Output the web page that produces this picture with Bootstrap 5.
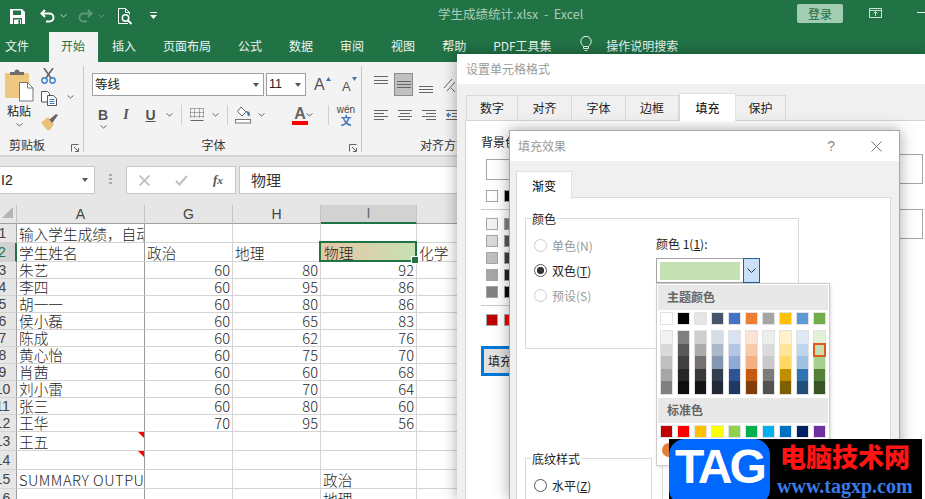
<!DOCTYPE html>
<html lang="zh-CN">
<head>
<meta charset="utf-8">
<title>学生成绩统计.xlsx - Excel</title>
<link href="https://cdn.jsdelivr.net/npm/bootstrap@5.3.0/dist/css/bootstrap.min.css" rel="stylesheet">
<style>
html,body{margin:0;height:499px;overflow:hidden}
body{width:925px;position:relative;font-family:"Noto Sans CJK SC","Liberation Sans",sans-serif;font-size:12px;color:#222;background:#fff}
svg{display:block;flex:none}
/* title bar */
.titlebar{height:32px;background:#217346;color:#a9cdb9;padding-left:10px}
.qat{gap:15px}
.q-undo{gap:5px}
.q-redo{gap:5px;margin-left:-4px}
.q-prev{margin-left:-2px}
.q-more{margin-left:2px}
.doc-title{position:absolute;left:438px;top:5px;font-size:12.5px;line-height:18px;white-space:pre}
.login{position:absolute;left:797px;top:4px;width:46px;height:19px;background:#a3cdb3;border:0;border-radius:2px;color:#1d6b40;font-size:12px;line-height:19px;padding:0}
.tb-ico{position:absolute}
.tb-ico.a{left:869px;top:8px}.tb-ico.b{left:917px;top:12px}
/* tabs */
.rtabs{height:30px;background:#217346;flex-wrap:nowrap;color:#e9f2ed;font-size:12px}
.rtabs .nav-link{color:#eef5f1;padding:5px 13.5px 0;height:30px;line-height:18px;border-radius:0;white-space:nowrap}
.rtabs .nav-link.first{padding-left:5px;padding-right:20px}
.rtabs .nav-link.active{background:#f3f3f3;color:#217346;padding:5px 13px 0 12px}
.rtabs .nav-link.home-next{padding-left:14px}
.rtabs .bulb{padding:4px 14px 0 15px}
/* ribbon */
.ribbon{height:95px;background:#f3f3f3;border-bottom:2px solid #d4d4d4;padding-top:4px}
.rgroup{height:86px;border-right:1px solid #c8c8c8;display:flex;flex-direction:column;flex:none}
.g1{width:84px}.g2{width:278px;padding-left:8px}.g3{width:95px;padding-left:12px}
.glabel{margin-top:auto;height:15px;line-height:15px;font-size:12px;position:relative;color:#333;text-align:center}
.g1 .glabel{padding-right:29px}
.g2 .glabel{padding-right:26px}
.g3 .glabel{text-align:left;padding-left:46px;white-space:nowrap;overflow:hidden}
.launcher{position:absolute;right:4px;bottom:0}
.combo{height:23px;background:#fff;border:1px solid #a0a0a0;display:flex;align-items:center;font-size:12.5px;padding:0 4px 0 2px;justify-content:space-between}
.combo.font{width:172px}.combo.size{width:40px;margin-left:2px}
.combo.size span{font-family:"Liberation Sans",sans-serif}
.tri{width:0;height:0;border-left:3.5px solid transparent;border-right:3.5px solid transparent;border-top:4px solid #555}
.grow{font-family:"Liberation Sans",sans-serif;color:#555;line-height:1}
.grow.big{font-size:16px;width:12px}
.grow.small{font-size:13px;width:10px;margin-top:3px}
.row2{display:grid;grid-template-columns:22px 24px 25px 12px 6px 1px 30px 6px 9px 1px 30px 6px 6px 24px 12px 6px 1px 30px 6px;height:20px;margin-top:9px;align-items:center;justify-items:center}
.fmt{font:700 14px/1 "Liberation Sans",sans-serif;color:#555}
.fmt.i{font-style:italic;font-family:"Liberation Serif",serif}
.fmt.u{text-decoration:underline}
.vsep{width:1px;height:20px;background:#cfcfcf}
.pin{font:10px/10px "Liberation Sans",sans-serif;color:#444;text-align:center;width:20px}
.pin b{display:block;font-size:11px;line-height:10px;color:#3f78b5;font-family:"Noto Sans CJK SC",sans-serif;font-weight:700}
.a-sel{width:22px;height:23px;background:#c0c0c0;border:1px solid #8c8c8c;margin:0 6px;display:flex;align-items:center;justify-content:center}
.fontA{position:relative;width:16px;text-align:center;font:700 16px/15px "Liberation Sans",sans-serif;color:#666;border-bottom:4px solid #f00}
/* formula bar */
.fbar{height:48px;background:#e6e6e6;padding-top:9px;align-items:flex-start}
.namebox{width:95px;height:28px;background:#fff;border:1px solid #c6c6c6;border-left:0;font-size:14px;line-height:26px;padding:0 6px 0 1px;display:flex;justify-content:space-between;align-items:center;font-family:"Liberation Sans",sans-serif}
.dots{width:31px}
.fnbtn{width:110px;height:28px;background:#fff;border:1px solid #c6c6c6;align-items:center;padding-left:12px}
.fx{font:italic 700 13px/1 "Liberation Serif",serif;color:#555;margin-left:25px}
.fnbtn .chk{margin-left:25px}
.finput{margin-left:3px;height:28px;flex:1;background:#fff;border:1px solid #c6c6c6;font-size:15px;line-height:26px;padding-left:11px;color:#333}
/* sheet */
.sheet-wrap{height:294px;overflow:hidden}
.sheet{table-layout:fixed;border-collapse:separate;border-spacing:0;width:925px;font-size:14.67px;color:#262626;font-weight:300}
.sheet th,.sheet td{padding:0 2px;border-right:1px solid #d4d4d4;border-bottom:1px solid #d4d4d4;height:19px;line-height:17px;white-space:nowrap;overflow:hidden;vertical-align:bottom}
.sheet tr.n td,.sheet tr.n th{height:17px;line-height:16px}
.sheet thead th{background:#e6e6e6;text-align:center;font-weight:400;color:#444;border-bottom-color:#9f9f9f;border-right-color:#c6c6c6;font-family:"Liberation Sans",sans-serif;font-size:14px}
.sheet tbody th{background:#e6e6e6;border-right-color:#9f9f9f;font-weight:400;color:#444;text-align:center;padding:0;text-indent:-11px;font-family:"Liberation Sans",sans-serif;font-size:14px}
.sheet td.a{border-right-color:#9a9a9a}
.sheet td.sum{letter-spacing:.5px}
.sheet td.r{text-align:right;padding-right:2px}
.sheet th.corner{position:relative;padding:0}
.corner::after{content:"";position:absolute;left:2px;top:2px;border-left:11px solid transparent;border-bottom:11px solid #b5b5b5}
.sheet thead th.on{background:#d2d2d2;border-bottom:2px solid #217346;color:#666}
.sheet tbody th.on{background:#d2d2d2;border-right:2px solid #217346;color:#217346}
.cmt{position:relative}
.cmt::after{content:"";position:absolute;right:0;top:0;border-top:6px solid #f00;border-left:6px solid transparent}
.sheet td.sel{position:relative;overflow:visible;background:linear-gradient(90deg,#eac6a4,#c5e0b3);padding-left:3px}
.sel::before{content:"";position:absolute;left:-2px;top:-2px;right:-1px;bottom:-1px;border:2px solid #217346}
.sel::after{content:"";position:absolute;right:-3px;bottom:-3px;width:6px;height:6px;background:#217346;border:1px solid #fff;box-sizing:content-box}
/* dialogs */
.dlg{position:absolute;background:#f0f0f0;box-shadow:0 0 14px rgba(0,0,0,.35);overflow:hidden}
.dlg-title{height:30px;background:#fff;color:#9a9a9a;font-size:12px;line-height:30px;padding-left:9px;display:flex;align-items:center}
.back{left:457px;top:54px;width:468px;height:445px}
.front{left:509px;top:130px;width:391px;height:369px;border:1px solid #a8a8a8;border-bottom:0}
.xtabs{border-bottom:0;height:27px;flex-wrap:nowrap}
.xtabs .nav-link{height:25px;margin:2px 0 0;background:#f0f0f0;border:1px solid #d9d9d9;border-bottom:0;border-left:0;border-radius:0;color:#222;padding:0;line-height:23px;text-align:center;font-size:12px}
.xtabs .nav-item:first-child .nav-link{border-left:1px solid #d9d9d9}
.xtabs .nav-link.active{background:#fff;height:28px;margin-top:0;line-height:28px;border-left:1px solid #d9d9d9;position:relative;z-index:1}
.back .xtabs{margin:9px 0 0 9px}
.t1{width:52px}.t2,.t3{width:54px}.t4{width:53px}.t5{width:57px}.t6{width:50px}
.bpanel{margin-left:8px;width:520px;background:#fff;border:1px solid #d4d4d4;height:400px;padding:12px 0 0 15px;display:flex}
.bleft{width:270px;flex:none}
.nocolor{width:120px;height:21px;margin:8px 0 0 5px;border:1px solid #a5a5a5;background:#fff}
.swrow{display:flex;gap:6px;margin:5px 0 0 5px}
.swrow.t{margin-top:10px}
.sw{width:12px;height:12px;border:1px solid #a5a5a5;flex:none}
.hline{border-top:1px solid #c9c9c9;margin:7px 0 0;width:120px}
.hline+.swrow{margin-top:8px}
.fillbtn{width:100px;height:30px;margin-top:20px;border:3px solid #0078d7;border-radius:0;background:#e1e1e1;font-size:12px;padding:0 0 0 4px;text-align:left;color:#222;line-height:22px;white-space:nowrap}
.bright{flex:1;padding-top:21px;margin-left:22px}
.rbox{height:30px;border:1px solid #a5a5a5;background:#fff;margin-bottom:25px;width:150px}
.front .dlg-title{padding-left:8px;justify-content:space-between;padding-right:17px}
.q{font:14px "Liberation Sans",sans-serif;color:#888;margin-left:auto;margin-right:36px}
.front .xtabs{margin:10px 0 0 6px}
.front .xtabs .nav-link{width:56px}
.fpanel{margin:-1px 8px 0 6px;background:#fff;border:1px solid #d9d9d9;height:320px;padding:20px 8px 0}
.fs{border:1px solid #d9d9d9;position:relative}
.fs-main{width:274px;height:131px;display:flex;padding:0 8px}
.leg{position:absolute;left:5px;top:-8px;background:#fff;padding:0 1px;line-height:15px;font-size:12px;color:#222}
.radios{width:122px;padding-top:14px;flex:none}
.radio-row{display:flex;align-items:center;height:25px;color:#999;font-size:12px;gap:5px}
.radio-row.on{color:#222}
.radio-row .form-check-input{margin:0;width:13px;height:13px;flex:none;border-color:#ccc;background:#fff;opacity:1}
.radio-row.on .form-check-input{border:1px solid #555;background-image:radial-gradient(circle,#333 0 3.4px,transparent 3.9px);background-color:#fff}
.c-label{margin-top:17px;line-height:16px;color:#222;font-size:12px}
.colorwrap{position:relative;padding-top:0}
.pick{margin-top:6px;width:104px;height:25px;border:1px solid #a5a5a5;background:#fff;display:flex;padding:0}
.pick i{display:block;width:80px;height:18px;margin:3px;background:#c5e0b3}
.pick b{margin-left:auto;width:17px;background:#c9e0f7;border:1px solid #245f9a;display:flex;align-items:center;justify-content:center;height:25px;margin-top:-1px;margin-right:-1px}
.pop{position:absolute;left:0;top:64px;width:174px;height:183px;background:#fff;border:1px solid #cdcdcd;padding:1px;box-shadow:1px 1px 3px rgba(0,0,0,.15);z-index:3}
.pop h6{margin:0;height:25px;background:#e8e8e8;color:#666;font-size:12px;font-weight:700;line-height:24px;padding-left:9px}
.sgrid{display:grid;grid-template-columns:repeat(10,13px);column-gap:4px;padding-left:2px}
.sgrid.one{margin:2px 0 5px}
.sgrid.one div{height:13px;border:1px solid #e2e2e2}
.shades{margin-bottom:3px}
.sc{border:1px solid #e2e2e2;height:65px}
.sc div{height:12.6px;position:relative}
.sc .pk{outline:2px solid #e2591c;outline-offset:-1px;z-index:1}
.more{display:block;margin:1px 0 0 4px}
.lower{display:flex;gap:10px;margin-top:109px}
.fs-low{width:127px;height:60px;padding:14px 8px 0}
.fs-low .radio-row{color:#222}
.fs-low .form-check-input{border-color:#555}
.fs-r{width:150px;height:60px;margin-top:2px}
/* watermark */
.wm{position:absolute;left:669px;top:439px;width:253px;height:60px;background:#000;z-index:5;overflow:hidden;display:flex}
.wm-tag{width:101px;height:66px;background:#0068ff;border-radius:16px;color:#fff;font:700 48px/56px "Liberation Sans",sans-serif;letter-spacing:-3px;text-align:center;flex:none}
.wm-t{flex:1;padding-left:10px}
.wm-cn{color:#ff1414;font-size:26px;font-weight:900;line-height:34px;white-space:nowrap}
.wm-en{color:#3a7be8;font:700 20px/20px "Liberation Serif",serif;margin:3px 0 0 -3px;white-space:nowrap}
</style>
</head>
<body>
<header class="titlebar d-flex align-items-center">
  <div class="qat d-flex align-items-center">
    <svg width="15" height="15" viewBox="0 0 15 15"><path d="M0 0h12l3 3v12H0z" fill="#fff"/><path d="M3 1.500h8v4.500H3zM3 9h9v6H3z" fill="#217346"/><path d="M4 10.500h7V15H4z" fill="#fff"/><path d="M8.500 11h1.500v4H8.500z" fill="#217346"/></svg>
    <div class="q-undo d-flex align-items-center">
      <svg width="15" height="14" viewBox="0 0 15 14" fill="none" stroke="#fff" stroke-width="2"><path d="M5 1 1.500 4.500 5 8"/><path d="M2 4.500h7.500a4 4 0 0 1 0 8H6"/></svg>
      <svg width="7" height="4" viewBox="0 0 7 4" fill="none" stroke="#b7d3c3"><path d="m.5.500 3 2.500 3-2.500"/></svg>
    </div>
    <div class="q-redo d-flex align-items-center">
      <svg width="15" height="14" viewBox="0 0 15 14" fill="none" stroke="#5d9a79" stroke-width="2"><path d="M10 1l3.500 3.500L10 8"/><path d="M13 4.500H5.500a4 4 0 0 0 0 8H9"/></svg>
      <svg width="7" height="4" viewBox="0 0 7 4" fill="none" stroke="#5d9a79"><path d="m.5.500 3 2.500 3-2.500"/></svg>
    </div>
    <svg class="q-prev" width="15" height="17" viewBox="0 0 15 17" fill="none" stroke="#fff"><path d="M10 15.500H.5V.5h7l4 4v2"/><path d="M7.500.5v4h4"/><circle cx="7.500" cy="10" r="3.200" stroke-width="1.500"/><path d="m10 12.500 3.500 3.500" stroke-width="2"/></svg>
    <svg class="q-more" width="7" height="8" viewBox="0 0 7 8"><path d="M0 0h7v1H0z M0 3h7L3.500 7z" fill="#fff"/></svg>
  </div>
  <span class="doc-title">学生成绩统计.xlsx  -  Excel</span>
  <button class="login btn" type="button">登录</button>
  <svg class="tb-ico a" width="13" height="10" viewBox="0 0 13 10" fill="none" stroke="#cfe2d7"><path d="M.5.500h12v9H.5zM.5 2.500h12M6.500 8V4M4.500 5.500l2-2 2 2"/></svg>
  <svg class="tb-ico b" width="8" height="1" viewBox="0 0 8 1"><path d="M0 0h8v1H0z" fill="#e6f0ea"/></svg>
</header>
<ul class="nav rtabs">
  <li class="nav-item"><a class="nav-link first" href="#">文件</a></li>
  <li class="nav-item"><a class="nav-link active" href="#">开始</a></li>
  <li class="nav-item"><a class="nav-link home-next" href="#">插入</a></li>
  <li class="nav-item"><a class="nav-link" href="#">页面布局</a></li>
  <li class="nav-item"><a class="nav-link" href="#">公式</a></li>
  <li class="nav-item"><a class="nav-link" href="#">数据</a></li>
  <li class="nav-item"><a class="nav-link" href="#">审阅</a></li>
  <li class="nav-item"><a class="nav-link" href="#">视图</a></li>
  <li class="nav-item"><a class="nav-link" href="#">帮助</a></li>
  <li class="nav-item"><a class="nav-link" href="#">PDF工具集</a></li>
  <li class="nav-item bulb"><svg width="12" height="16" viewBox="0 0 12 16" fill="none" stroke="#eef5f1"><path d="M3.500 10.500C2.500 9 .8 8 .8 5.500a5.200 5.200 0 0 1 10.400 0c0 2.500-1.700 3.500-2.700 5zM3.500 10.500h5v2h-5zM4.500 14.500h3"/></svg></li>
  <li class="nav-item"><a class="nav-link ps-0" href="#">操作说明搜索</a></li>
</ul>
<section class="ribbon d-flex">
  <div class="rgroup g1">
    <div class="d-flex">
      <div class="d-flex flex-column align-items-center" style="width:28px;margin-left:5px">
        <svg width="29" height="33" viewBox="0 0 29 33" style="margin-top:3px"><rect y="4" width="24" height="25" rx="1" fill="#efc77e"/><path d="M5 6V3h4.500a2.500 2.500 0 0 1 5 0H19v3z" fill="#6e6e6e"/><path d="M14.500 13.500h8l5.500 5.500v13H14.500z" fill="#fff" stroke="#777"/><path d="M22.500 13.500V19H28" fill="none" stroke="#777"/></svg>
        <span style="line-height:15px;font-size:12px;margin-top:1px">粘贴</span>
        <svg width="7" height="4" viewBox="0 0 7 4" fill="none" stroke="#666" style="margin-top:5px"><path d="m.5.500 3 2.500 3-2.500"/></svg>
      </div>
      <div class="d-flex flex-column" style="margin-left:8px">
        <svg width="15" height="16" viewBox="0 0 15 16" fill="none" style="margin-top:2px"><path d="M3 0l7 10M12 0 5 10" stroke="#666" stroke-width="1.600"/><circle cx="3.500" cy="12.500" r="2.700" stroke="#3d7fc4" stroke-width="1.400"/><circle cx="11.500" cy="12.500" r="2.700" stroke="#3d7fc4" stroke-width="1.400"/></svg>
        <div class="d-flex align-items-center" style="margin-top:7px">
          <svg width="16" height="15" viewBox="0 0 16 15" fill="none" stroke="#555"><path d="M.5.500h6l2 2V11H.5z" fill="#fff"/><path d="M6.500 4.500h6l3 3v7h-9z" fill="#fff"/><path d="M8.500 8.500h5M8.500 10.500h5M8.500 12.500h5" stroke="#3d7fc4"/></svg>
          <svg width="7" height="4" viewBox="0 0 7 4" fill="none" stroke="#666" style="margin-left:10px;margin-top:-3px"><path d="m.5.500 3 2.500 3-2.500"/></svg>
        </div>
        <svg width="18" height="16" viewBox="0 0 18 16" style="margin-top:8px"><path d="M0 8.500 7 3l6 7-4 6H6z" fill="#eac07c"/><path d="m8 5 3 4 1-1 5-7-2-1-6 5z" fill="#666"/></svg>
      </div>
    </div>
    <div class="glabel">剪贴板<svg class="launcher" width="8" height="8" viewBox="0 0 8 8" fill="none" stroke="#666"><path d="M.5 7.500v-7h7M3 3l4 4M4 7.500h3.500V4"/></svg></div>
  </div>
  <div class="rgroup g2">
    <div class="d-flex align-items-center" style="margin-top:7px">
      <div class="combo font"><span>等线</span><i class="tri"></i></div>
      <div class="combo size"><span>11</span><i class="tri"></i></div>
      <div class="d-flex ms-2"><span class="grow big">A</span><svg width="5" height="4" viewBox="0 0 5 4"><path d="M0 4h5L2.500 0z" fill="#3f78b5"/></svg></div>
      <div class="d-flex" style="margin-left:11px"><span class="grow small">A</span><svg width="5" height="4" viewBox="0 0 5 4"><path d="M0 0h5L2.500 4z" fill="#3f78b5"/></svg></div>
    </div>
    <div class="row2">
      <span class="fmt">B</span><span class="fmt i">I</span><span class="fmt u">U</span>
      <svg width="7" height="4" viewBox="0 0 7 4" fill="none" stroke="#666"><path d="m.5.500 3 2.500 3-2.500"/></svg><i></i><i class="vsep"></i>
      <svg width="14" height="14" viewBox="0 0 14 14" fill="none" stroke="#666"><path d="M.5.500h13M.5 4.500h13M.5 8.500h13M.5.500v10M4.500.500v10M9.500.500v10M13.500.500v10" stroke-dasharray="1 1"/><path d="M.5 12.500h13"/></svg>
      <svg width="7" height="4" viewBox="0 0 7 4" fill="none" stroke="#666"><path d="m.5.500 3 2.500 3-2.500"/></svg><i></i><i class="vsep"></i>
      <svg width="16" height="18" viewBox="0 0 16 18" fill="none"><path d="m6 1 5 5-4 4-4.500-4.500z" fill="#fff" stroke="#666"/><path d="M11 5c2 0 4 1 4 3s-1 2-1.500 2-1-1-1-2z" fill="#3f78b5"/><rect x=".5" y="13.500" width="15" height="3.500" fill="#fff" stroke="#777"/></svg>
      <svg width="7" height="4" viewBox="0 0 7 4" fill="none" stroke="#666"><path d="m.5.500 3 2.500 3-2.500"/></svg><i></i><i></i>
      <span class="fontA">A</span>
      <svg width="7" height="4" viewBox="0 0 7 4" fill="none" stroke="#666"><path d="m.5.500 3 2.500 3-2.500"/></svg><i></i><i class="vsep"></i>
      <span class="pin">wén<b>文</b></span>
      <svg width="7" height="4" viewBox="0 0 7 4" fill="none" stroke="#666"><path d="m.5.500 3 2.500 3-2.500"/></svg>
    </div>
    <div class="glabel">字体<svg class="launcher" width="8" height="8" viewBox="0 0 8 8" fill="none" stroke="#666"><path d="M.5 7.500v-7h7M3 3l4 4M4 7.500h3.500V4"/></svg></div>
  </div>
  <div class="rgroup g3 border-0">
    <div class="d-flex align-items-center" style="margin-top:7px">
      <svg width="14" height="23" viewBox="0 0 14 23" stroke="#666"><path d="M0 3.500h14M0 7.500h14M0 10.500h14" fill="none"/></svg>
      <div class="a-sel"><svg width="14" height="9" viewBox="0 0 14 9" stroke="#666"><path d="M0 1.500h14M0 4.500h14M0 7.500h14"/></svg></div>
      <svg width="14" height="23" viewBox="0 0 14 23" stroke="#666"><path d="M0 13.500h14M0 16.500h14M0 19.500h14"/></svg>
      <svg width="14" height="18" viewBox="0 0 14 18" fill="none" stroke="#666" style="margin-left:10px"><path d="m1 12 8-9M4 15l8-9M8 12l4 4"/></svg>
    </div>
    <div class="d-flex align-items-center" style="margin-top:9px;height:20px;gap:10px">
      <svg width="14" height="11" viewBox="0 0 14 11" stroke="#666"><path d="M0 .5h14M0 3.500h10M0 6.500h14M0 9.500h10"/></svg>
      <svg width="14" height="11" viewBox="0 0 14 11" stroke="#666"><path d="M0 .5h14M2 3.500h10M0 6.500h14M2 9.500h10"/></svg>
      <svg width="14" height="11" viewBox="0 0 14 11" stroke="#666"><path d="M0 .5h14M4 3.500h10M0 6.500h14M4 9.500h10"/></svg>
      <svg width="11" height="11" viewBox="0 0 14 11" preserveAspectRatio="xMinYMid slice" fill="none" stroke="#666"><path d="M0 .5h14M6 3.500h8M6 6.500h8M0 9.500h14"/><path d="M5 5H1m2-2L1 5l2 2" stroke="#3f78b5" stroke-width="1.400"/></svg>
    </div>
    <div class="glabel">对齐方式</div>
  </div>
</section>
<section class="fbar d-flex">
  <div class="namebox"><span>I2</span><i class="tri"></i></div>
  <div class="dots d-flex justify-content-center pt-2"><svg width="3" height="11" viewBox="0 0 3 11"><path d="M0 0h3v2H0zM0 4h3v2H0zM0 8h3v2H0z" fill="#aaa"/></svg></div>
  <div class="fnbtn d-flex">
    <svg width="11" height="11" viewBox="0 0 11 11" stroke="#c0c0c0" stroke-width="1.800"><path d="m.5.500 10 10M10.500.500l-10 10"/></svg>
    <svg class="chk" width="13" height="11" viewBox="0 0 13 11" fill="none" stroke="#c0c0c0" stroke-width="2.200"><path d="m1 6 3.500 3.500L12 1"/></svg>
    <span class="fx">f<small>x</small></span>
  </div>
  <div class="finput">物理</div>
</section>
<div class="sheet-wrap">
<table class="sheet">
  <colgroup><col style="width:17px"><col style="width:128px"><col style="width:88px"><col style="width:88px"><col style="width:96px"><col></colgroup>
  <thead><tr><th class="corner"></th><th>A</th><th>G</th><th>H</th><th class="on">I</th><th></th></tr></thead>
  <tbody>
    <tr><th>1</th><td class="a">输入学生成绩，自动</td><td></td><td></td><td></td><td></td></tr>
    <tr><th class="on">2</th><td class="a">学生姓名</td><td>政治</td><td>地理</td><td class="sel">物理</td><td>化学</td></tr>
    <tr class="n"><th>3</th><td class="a">朱艺</td><td class="r">60</td><td class="r">80</td><td class="r">92</td><td></td></tr>
    <tr class="n"><th>4</th><td class="a">李四</td><td class="r">60</td><td class="r">95</td><td class="r">86</td><td></td></tr>
    <tr class="n"><th>5</th><td class="a">胡一一</td><td class="r">60</td><td class="r">80</td><td class="r">86</td><td></td></tr>
    <tr class="n"><th>6</th><td class="a">侯小磊</td><td class="r">60</td><td class="r">65</td><td class="r">83</td><td></td></tr>
    <tr class="n"><th>7</th><td class="a">陈成</td><td class="r">60</td><td class="r">62</td><td class="r">76</td><td></td></tr>
    <tr class="n"><th>8</th><td class="a">黄心怡</td><td class="r">60</td><td class="r">75</td><td class="r">70</td><td></td></tr>
    <tr class="n"><th>9</th><td class="a">肖茜</td><td class="r">60</td><td class="r">60</td><td class="r">68</td><td></td></tr>
    <tr class="n"><th>10</th><td class="a">刘小雷</td><td class="r">60</td><td class="r">70</td><td class="r">64</td><td></td></tr>
    <tr class="n"><th>11</th><td class="a">张三</td><td class="r">60</td><td class="r">80</td><td class="r">60</td><td></td></tr>
    <tr class="n"><th>12</th><td class="a">王华</td><td class="r">70</td><td class="r">95</td><td class="r">56</td><td></td></tr>
    <tr><th>13</th><td class="a cmt">王五</td><td></td><td></td><td></td><td></td></tr>
    <tr><th>14</th><td class="a cmt"></td><td></td><td></td><td></td><td></td></tr>
    <tr><th>15</th><td class="a sum">SUMMARY OUTPUT</td><td></td><td></td><td>政治</td><td></td></tr>
    <tr><th>16</th><td class="a"></td><td></td><td></td><td>地理</td><td></td></tr>
  </tbody>
</table>
</div>

<div class="dlg back">
  <div class="dlg-title">设置单元格格式</div>
  <ul class="nav nav-tabs xtabs">
    <li class="nav-item"><a class="nav-link t1" href="#">数字</a></li>
    <li class="nav-item"><a class="nav-link t2" href="#">对齐</a></li>
    <li class="nav-item"><a class="nav-link t3" href="#">字体</a></li>
    <li class="nav-item"><a class="nav-link t4" href="#">边框</a></li>
    <li class="nav-item"><a class="nav-link t5 active" href="#">填充</a></li>
    <li class="nav-item"><a class="nav-link t6" href="#">保护</a></li>
  </ul>
  <div class="bpanel">
    <div class="bleft">
      <div>背景色(C):</div>
      <div class="nocolor"></div>
      <div class="swrow t"><span class="sw" style="background:#fff"></span><span class="sw" style="background:#000"></span></div>
      <div class="hline"></div>
      <div class="swrow"><span class="sw" style="background:#f2f2f2"></span><span class="sw" style="background:#7f7f7f"></span></div>
      <div class="swrow"><span class="sw" style="background:#d9d9d9"></span><span class="sw" style="background:#595959"></span></div>
      <div class="swrow"><span class="sw" style="background:#bfbfbf"></span><span class="sw" style="background:#3f3f3f"></span></div>
      <div class="swrow"><span class="sw" style="background:#a6a6a6"></span><span class="sw" style="background:#262626"></span></div>
      <div class="swrow"><span class="sw" style="background:#808080"></span><span class="sw" style="background:#0d0d0d"></span></div>
      <div class="hline"></div>
      <div class="swrow"><span class="sw" style="background:#c00000"></span><span class="sw" style="background:#f00"></span></div>
      <button class="btn fillbtn" type="button">填充效果(I)...</button>
    </div>
    <div class="bright"><div class="rbox"></div><div class="rbox"></div></div>
  </div>
</div>

<div class="dlg front">
  <div class="dlg-title"><span>填充效果</span><span class="q">?</span><svg width="11" height="11" viewBox="0 0 11 11" stroke="#777"><path d="m.5.500 10 10M10.500.500l-10 10"/></svg></div>
  <ul class="nav nav-tabs xtabs"><li class="nav-item"><a class="nav-link active" href="#">渐变</a></li></ul>
  <div class="fpanel">
    <div class="fs fs-main">
      <span class="leg">颜色</span>
      <div class="radios">
        <label class="radio-row"><input class="form-check-input" type="radio" disabled><span>单色(N)</span></label>
        <label class="radio-row on"><input class="form-check-input" type="radio" checked><span>双色(<u>T</u>)</span></label>
        <label class="radio-row"><input class="form-check-input" type="radio" disabled><span>预设(S)</span></label>
      </div>
      <div class="colorwrap">
        <div class="c-label">颜色 1(<u>1</u>):</div>
        <div class="pick"><i></i><b><svg width="9" height="5" viewBox="0 0 9 5" fill="none" stroke="#333"><path d="m.5.500 4 4 4-4"/></svg></b></div>
        <div class="pop">
          <h6>主题颜色</h6>
          <div class="sgrid one">
            <div style="background:#fff"></div><div style="background:#000"></div><div style="background:#e7e6e6"></div><div style="background:#44546a"></div><div style="background:#4472c4"></div><div style="background:#ed7d31"></div><div style="background:#a5a5a5"></div><div style="background:#ffc000"></div><div style="background:#5b9bd5"></div><div style="background:#70ad47"></div>
          </div>
          <div class="sgrid shades">
            <div class="sc"><div style="background:#f2f2f2"></div><div style="background:#d9d9d9"></div><div style="background:#bfbfbf"></div><div style="background:#a6a6a6"></div><div style="background:#808080"></div></div>
            <div class="sc"><div style="background:#808080"></div><div style="background:#595959"></div><div style="background:#404040"></div><div style="background:#262626"></div><div style="background:#0d0d0d"></div></div>
            <div class="sc"><div style="background:#d0cece"></div><div style="background:#aeabab"></div><div style="background:#757171"></div><div style="background:#3a3838"></div><div style="background:#171616"></div></div>
            <div class="sc"><div style="background:#d6dce4"></div><div style="background:#acb9ca"></div><div style="background:#8497b0"></div><div style="background:#333f4f"></div><div style="background:#222b35"></div></div>
            <div class="sc"><div style="background:#d9e2f3"></div><div style="background:#b4c6e7"></div><div style="background:#8eaadb"></div><div style="background:#2f5496"></div><div style="background:#1f3864"></div></div>
            <div class="sc"><div style="background:#fbe4d5"></div><div style="background:#f7caac"></div><div style="background:#f4b083"></div><div style="background:#c55a11"></div><div style="background:#833c0b"></div></div>
            <div class="sc"><div style="background:#ededed"></div><div style="background:#dbdbdb"></div><div style="background:#c9c9c9"></div><div style="background:#7b7b7b"></div><div style="background:#525252"></div></div>
            <div class="sc"><div style="background:#fff2cc"></div><div style="background:#ffe599"></div><div style="background:#ffd966"></div><div style="background:#bf8f00"></div><div style="background:#7f6000"></div></div>
            <div class="sc"><div style="background:#deeaf6"></div><div style="background:#bdd6ee"></div><div style="background:#9cc2e5"></div><div style="background:#2e74b5"></div><div style="background:#1f4e79"></div></div>
            <div class="sc"><div style="background:#e2efd9"></div><div class="pk" style="background:#c5e0b3"></div><div style="background:#a8d08d"></div><div style="background:#538135"></div><div style="background:#375623"></div></div>
          </div>
          <h6>标准色</h6>
          <div class="sgrid one">
            <div style="background:#c00000"></div><div style="background:#f00"></div><div style="background:#ffc000"></div><div style="background:#ff0"></div><div style="background:#92d050"></div><div style="background:#00b050"></div><div style="background:#00b0f0"></div><div style="background:#0070c0"></div><div style="background:#002060"></div><div style="background:#7030a0"></div>
          </div>
          <svg class="more" width="14" height="14" viewBox="0 0 14 14"><circle cx="7" cy="7" r="7" fill="#e2803a"/><path d="M7 7 13 11a7 7 0 0 1-6 3z" fill="#4472c4"/></svg>
        </div>
      </div>
    </div>
    <div class="lower">
      <div class="fs fs-low"><span class="leg">底纹样式</span><label class="radio-row"><input class="form-check-input" type="radio"><span>水平(<u>Z</u>)</span></label></div>
      <div class="fs fs-r"></div>
    </div>
  </div>
</div>

<aside class="wm">
  <div class="wm-tag">TAG</div>
  <div class="wm-t"><div class="wm-cn">电脑技术网</div><div class="wm-en">www.tagxp.com</div></div>
</aside>
</body>
</html>
